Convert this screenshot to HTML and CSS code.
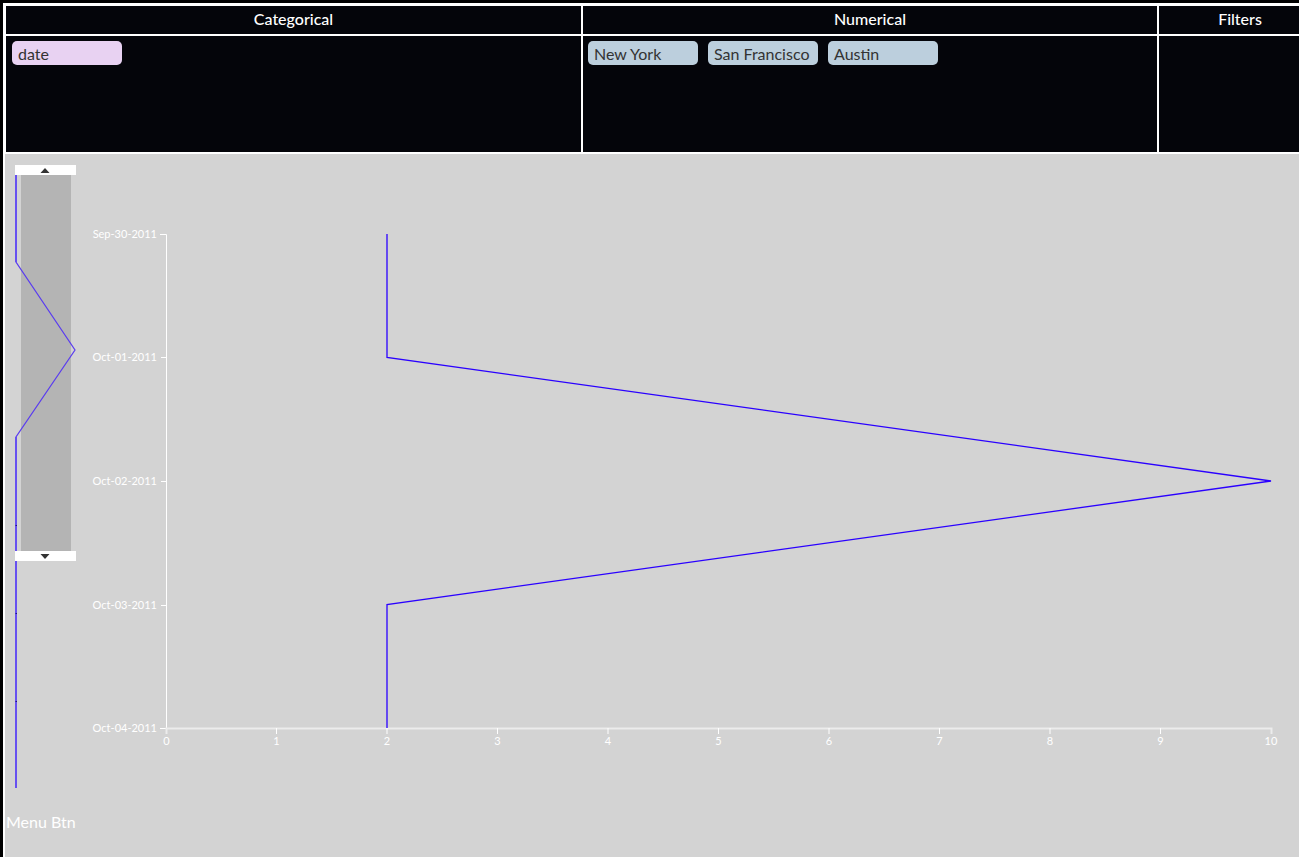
FILE: index.html
```html
<!DOCTYPE html>
<html>
<head>
<meta charset="utf-8">
<link rel="stylesheet" href="styles.css">
</head>
<body>
<div class="top">
  <div class="hdr">Categorical</div>
  <div class="hdr">Numerical</div>
  <div class="hdr hdr-last">Filters</div>
  <div class="cell"><span class="chip cat">date</span></div>
  <div class="cell"><span class="chip num">New York</span><span class="chip num">San Francisco</span><span class="chip num">Austin</span></div>
  <div class="cell"></div>
</div>
<div class="stage">
  <div class="side">
    <svg class="mini" width="81" height="659" viewBox="0 0 81 659">
      <rect x="16" y="21" width="50" height="376" fill="#b4b4b4"/>
      <polyline points="11,21 11,108 70,196 11,283 11,634" fill="none" stroke="#5a3cf0" stroke-width="1.2"/>
      <line x1="11" y1="21" x2="11" y2="108" stroke="#6650f0" stroke-width="2"/>
      <line x1="11" y1="283" x2="11" y2="634" stroke="#6650f0" stroke-width="2"/>
      <rect x="10.5" y="371" width="1.5" height="1" fill="#1c1280"/>
      <rect x="10.5" y="459" width="1.5" height="1" fill="#1c1280"/>
      <rect x="10.5" y="547" width="1.5" height="1" fill="#1c1280"/>
      <rect x="10" y="11" width="61" height="10" fill="#ffffff"/>
      <polygon points="35.5,19 44.5,19 40,14" fill="#333"/>
      <rect x="10" y="397" width="61" height="10" fill="#ffffff"/>
      <polygon points="35.5,400 44.5,400 40,405" fill="#333"/>
    </svg>
    <div class="menu">Menu Btn</div>
  </div>
  <svg class="chart" width="1213" height="650" viewBox="0 0 1213 650">
    <g class="yaxis">
      <path d="M74,80.5H80.5V574.5H74" fill="none" stroke="#ffffff" stroke-width="1"/>
      <line x1="75" y1="203.5" x2="80" y2="203.5" stroke="#fff"/>
      <line x1="75" y1="327.5" x2="80" y2="327.5" stroke="#fff"/>
      <line x1="75" y1="451.5" x2="80" y2="451.5" stroke="#fff"/>
      <text x="71" y="84">Sep-30-2011</text>
      <text x="71" y="207">Oct-01-2011</text>
      <text x="71" y="331">Oct-02-2011</text>
      <text x="71" y="455">Oct-03-2011</text>
      <text x="71" y="578">Oct-04-2011</text>
    </g>
    <g class="xaxis">
      <path d="M80.5,580V574.5H1185.5V580" fill="none" stroke="#ececec" stroke-width="2"/>
      <line x1="190.5" y1="574" x2="190.5" y2="580"/>
      <line x1="301" y1="574" x2="301" y2="580"/>
      <line x1="411.5" y1="574" x2="411.5" y2="580"/>
      <line x1="522" y1="574" x2="522" y2="580"/>
      <line x1="632.5" y1="574" x2="632.5" y2="580"/>
      <line x1="743" y1="574" x2="743" y2="580"/>
      <line x1="853.5" y1="574" x2="853.5" y2="580"/>
      <line x1="964" y1="574" x2="964" y2="580"/>
      <line x1="1074.5" y1="574" x2="1074.5" y2="580"/>
      <text x="80.5" y="591">0</text>
      <text x="190.5" y="591">1</text>
      <text x="301" y="591">2</text>
      <text x="411.5" y="591">3</text>
      <text x="522" y="591">4</text>
      <text x="632.5" y="591">5</text>
      <text x="743" y="591">6</text>
      <text x="853.5" y="591">7</text>
      <text x="964" y="591">8</text>
      <text x="1074.5" y="591">9</text>
      <text x="1185" y="591">10</text>
    </g>
    <polyline points="301,80 301,203.5 1185,327 301,450.5 301,574" fill="none" stroke="#2a00ff" stroke-width="1.3"/>
  </svg>
</div>
</body>
</html>
```
FILE: styles.css
```css
html, body {
  margin: 0;
  padding: 0;
  overflow: hidden;
  background: #000;
  height: 100%;
}
body {
  padding: 3px 0 0 3px;
  box-sizing: border-box;
  font-family: Lato, "Liberation Sans", sans-serif;
}
.top {
  display: grid;
  grid-template-columns: 575px 574px 1fr;
  grid-template-rows: 28px 116px;
  gap: 2px;
  padding: 3px 0 0 3px;
  background: #ffffff;
}
.hdr {
  background: #04050a;
  color: #ffffff;
  font-size: 16px;
  font-weight: 500;
  display: flex;
  align-items: center;
  justify-content: center;
  padding-bottom: 3px;
}
.hdr-last {
  padding-left: 22px;
}
.cell {
  background: #04050a;
  padding: 5px 6px;
  display: flex;
  align-items: flex-start;
  gap: 10px;
}
.cell + .cell {
  padding-left: 5px;
}
.chip {
  width: 110px;
  height: 24px;
  box-sizing: border-box;
  padding: 3px 6px 0;
  border-radius: 5px;
  font-size: 16px;
  line-height: 20px;
  color: #333;
}
.cat {
  background: #e8d2f2;
}
.num {
  background: #bccfdd;
}
.stage {
  display: flex;
  align-items: flex-start;
  background: #d3d3d3;
  border-top: 2px solid #fff;
  border-left: 2px solid #fff;
  height: 720px;
}
.side {
  width: 81px;
  flex: none;
  display: flex;
  flex-direction: column;
}
.mini {
  display: block;
}
.menu {
  color: #fff;
  font-size: 16px;
  line-height: 18px;
  padding-left: 1px;
  margin-top: 0;
}
.chart {
  display: block;
  flex: none;
}
.yaxis text {
  fill: #ffffff;
  font-family: Lato, "Liberation Sans", sans-serif;
  font-size: 11px;
  text-anchor: end;
}
.xaxis line {
  stroke: #ffffff;
  stroke-width: 1;
}
.xaxis text {
  fill: #ffffff;
  font-family: Lato, "Liberation Sans", sans-serif;
  font-size: 11px;
  text-anchor: middle;
}
```
